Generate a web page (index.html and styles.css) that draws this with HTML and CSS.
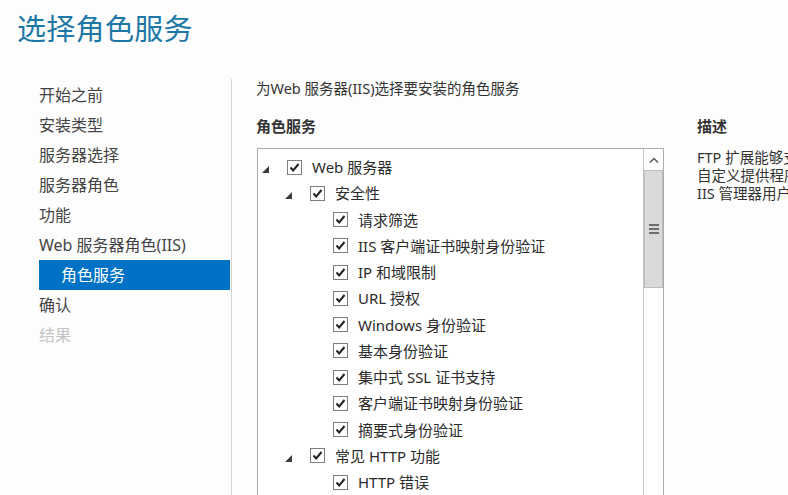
FILE: index.html
```html
<!DOCTYPE html>
<html lang="zh-CN">
<head>
<meta charset="utf-8">
<title>选择角色服务</title>
<link rel="stylesheet" href="styles.css">
</head>
<body>
<div class="page">
  <h1 class="title">选择角色服务</h1>
  <div class="main">
    <nav class="nav">
      <div class="nav-item">开始之前</div>
      <div class="nav-item">安装类型</div>
      <div class="nav-item">服务器选择</div>
      <div class="nav-item">服务器角色</div>
      <div class="nav-item">功能</div>
      <div class="nav-item">Web 服务器角色(IIS)</div>
      <div class="nav-item sub active">角色服务</div>
      <div class="nav-item">确认</div>
      <div class="nav-item disabled">结果</div>
    </nav>
    <section class="content">
      <div class="intro">为Web 服务器(IIS)选择要安装的角色服务</div>
      <div class="columns">
        <div class="col-left">
          <div class="label">角色服务</div>
          <div class="tree-box">
            <div class="tree">
              <div class="row l0"><span class="arrow"><svg width="7" height="7" viewBox="0 0 7 7"><polygon points="7,0 7,7 0,7" fill="#3c3c3c"/></svg></span><span class="cb"><svg width="13" height="13" viewBox="0 0 13 13"><polyline points="2.5,6.5 5.2,9.5 10.5,3" fill="none" stroke="#222" stroke-width="2"/></svg></span><span class="txt">Web 服务器</span></div>
              <div class="row l1"><span class="arrow"><svg width="7" height="7" viewBox="0 0 7 7"><polygon points="7,0 7,7 0,7" fill="#3c3c3c"/></svg></span><span class="cb"><svg width="13" height="13" viewBox="0 0 13 13"><polyline points="2.5,6.5 5.2,9.5 10.5,3" fill="none" stroke="#222" stroke-width="2"/></svg></span><span class="txt">安全性</span></div>
              <div class="row l2"><span class="arrow"></span><span class="cb"><svg width="13" height="13" viewBox="0 0 13 13"><polyline points="2.5,6.5 5.2,9.5 10.5,3" fill="none" stroke="#222" stroke-width="2"/></svg></span><span class="txt">请求筛选</span></div>
              <div class="row l2"><span class="arrow"></span><span class="cb"><svg width="13" height="13" viewBox="0 0 13 13"><polyline points="2.5,6.5 5.2,9.5 10.5,3" fill="none" stroke="#222" stroke-width="2"/></svg></span><span class="txt">IIS 客户端证书映射身份验证</span></div>
              <div class="row l2"><span class="arrow"></span><span class="cb"><svg width="13" height="13" viewBox="0 0 13 13"><polyline points="2.5,6.5 5.2,9.5 10.5,3" fill="none" stroke="#222" stroke-width="2"/></svg></span><span class="txt">IP 和域限制</span></div>
              <div class="row l2"><span class="arrow"></span><span class="cb"><svg width="13" height="13" viewBox="0 0 13 13"><polyline points="2.5,6.5 5.2,9.5 10.5,3" fill="none" stroke="#222" stroke-width="2"/></svg></span><span class="txt">URL 授权</span></div>
              <div class="row l2"><span class="arrow"></span><span class="cb"><svg width="13" height="13" viewBox="0 0 13 13"><polyline points="2.5,6.5 5.2,9.5 10.5,3" fill="none" stroke="#222" stroke-width="2"/></svg></span><span class="txt">Windows 身份验证</span></div>
              <div class="row l2"><span class="arrow"></span><span class="cb"><svg width="13" height="13" viewBox="0 0 13 13"><polyline points="2.5,6.5 5.2,9.5 10.5,3" fill="none" stroke="#222" stroke-width="2"/></svg></span><span class="txt">基本身份验证</span></div>
              <div class="row l2"><span class="arrow"></span><span class="cb"><svg width="13" height="13" viewBox="0 0 13 13"><polyline points="2.5,6.5 5.2,9.5 10.5,3" fill="none" stroke="#222" stroke-width="2"/></svg></span><span class="txt">集中式 SSL 证书支持</span></div>
              <div class="row l2"><span class="arrow"></span><span class="cb"><svg width="13" height="13" viewBox="0 0 13 13"><polyline points="2.5,6.5 5.2,9.5 10.5,3" fill="none" stroke="#222" stroke-width="2"/></svg></span><span class="txt">客户端证书映射身份验证</span></div>
              <div class="row l2"><span class="arrow"></span><span class="cb"><svg width="13" height="13" viewBox="0 0 13 13"><polyline points="2.5,6.5 5.2,9.5 10.5,3" fill="none" stroke="#222" stroke-width="2"/></svg></span><span class="txt">摘要式身份验证</span></div>
              <div class="row l1"><span class="arrow"><svg width="7" height="7" viewBox="0 0 7 7"><polygon points="7,0 7,7 0,7" fill="#3c3c3c"/></svg></span><span class="cb"><svg width="13" height="13" viewBox="0 0 13 13"><polyline points="2.5,6.5 5.2,9.5 10.5,3" fill="none" stroke="#222" stroke-width="2"/></svg></span><span class="txt">常见 HTTP 功能</span></div>
              <div class="row l2"><span class="arrow"></span><span class="cb"><svg width="13" height="13" viewBox="0 0 13 13"><polyline points="2.5,6.5 5.2,9.5 10.5,3" fill="none" stroke="#222" stroke-width="2"/></svg></span><span class="txt">HTTP 错误</span></div>
            </div>
            <div class="scrollbar">
              <div class="sb-up"><svg width="10" height="6" viewBox="0 0 10 6"><polyline points="1,5.5 5,1.5 9,5.5" fill="none" stroke="#555" stroke-width="1.4"/></svg></div>
              <div class="sb-thumb"><span class="grip"></span><span class="grip"></span><span class="grip"></span></div>
            </div>
          </div>
        </div>
        <div class="col-right">
          <div class="label">描述</div>
          <div class="desc">
            <span class="line">FTP 扩展能够支持</span>
            <span class="line">自定义提供程序、</span>
            <span class="line">IIS 管理器用户</span>
          </div>
        </div>
      </div>
    </section>
  </div>
</div>
</body>
</html>
```

FILE: styles.css
```css
html, body {
  margin: 0;
  padding: 0;
  width: 788px;
  height: 495px;
  overflow: hidden;
  background: #fdfdfd;
  font-family: "Noto Sans", "Noto Sans CJK SC", sans-serif;
  color: #333;
}

.page {
  width: 788px;
  height: 495px;
  overflow: hidden;
}

.title {
  margin: 0;
  padding: 11px 0 0 17px;
  height: 79px;
  box-sizing: border-box;
  font-size: 29px;
  font-weight: 400;
  line-height: 36px;
  color: #1c77a6;
  letter-spacing: 0.3px;
}

.main {
  display: flex;
  height: 416px;
}

.nav {
  width: 232px;
  box-sizing: border-box;
  padding: 1px 0 0 39px;
  border-right: 1px solid #d4d4d4;
  flex: none;
}

.nav-item {
  height: 30px;
  line-height: 30px;
  font-size: 16px;
  color: #444;
  white-space: nowrap;
  width: 191px;
}

.nav-item.sub {
  padding-left: 22px;
  box-sizing: border-box;
}

.nav-item.active {
  background: #0072c6;
  color: #fff;
}

.nav-item.disabled {
  color: #c4c4c4;
}

.content {
  flex: 1;
  padding-left: 24px;
  min-width: 0;
  overflow: hidden;
}

.intro {
  font-size: 14.5px;
  line-height: 18px;
  height: 18px;
  white-space: nowrap;
  color: #333;
}

.columns {
  display: flex;
  margin-top: 19px;
  gap: 33px;
}

.col-left {
  width: 408px;
  flex: none;
}

.label {
  font-size: 15px;
  font-weight: 700;
  line-height: 20px;
  height: 20px;
  margin-bottom: 12px;
  color: #333;
  white-space: nowrap;
}

.tree-box {
  margin-left: 1px;
  border: 1px solid #acacac;
  background: #fff;
  height: 400px;
  display: flex;
  box-sizing: border-box;
}

.tree {
  flex: 1;
  padding-top: 5px;
}

.row {
  height: 26.25px;
  display: flex;
  align-items: center;
  white-space: nowrap;
}

.row.l0 { padding-left: 4px; }
.row.l1 { padding-left: 27px; }
.row.l2 { padding-left: 50px; }

.arrow {
  width: 25px;
  height: 14px;
  flex: none;
  display: flex;
  align-items: flex-end;
  padding-bottom: 1px;
  box-sizing: border-box;
}

.arrow svg { display: block; }

.cb {
  width: 15px;
  height: 15px;
  box-sizing: border-box;
  border: 1px solid #7e7e7e;
  background: #fff;
  flex: none;
  display: flex;
  align-items: center;
  justify-content: center;
}

.cb svg { display: block; }

.txt {
  margin-left: 10px;
  font-size: 15px;
  line-height: 20px;
  color: #2b2b2b;
}

.scrollbar {
  width: 20px;
  flex: none;
  border-left: 1px solid #c4c4c4;
  box-sizing: border-box;
  background: #fff;
}

.sb-up {
  height: 21px;
  display: flex;
  align-items: center;
  justify-content: center;
}

.sb-up svg { display: block; }

.sb-thumb {
  height: 118px;
  background: #dadada;
  border: 1px solid #bdbdbd;
  box-sizing: border-box;
  display: flex;
  flex-direction: column;
  align-items: center;
  justify-content: center;
  gap: 2px;
}

.grip {
  width: 10px;
  height: 2px;
  background: #6e6e6e;
}

.col-right {
  flex: 1;
  min-width: 0;
  overflow: hidden;
}

.desc {
  font-size: 14.5px;
  line-height: 18px;
  color: #333;
}

.line {
  display: block;
  white-space: nowrap;
}
```
